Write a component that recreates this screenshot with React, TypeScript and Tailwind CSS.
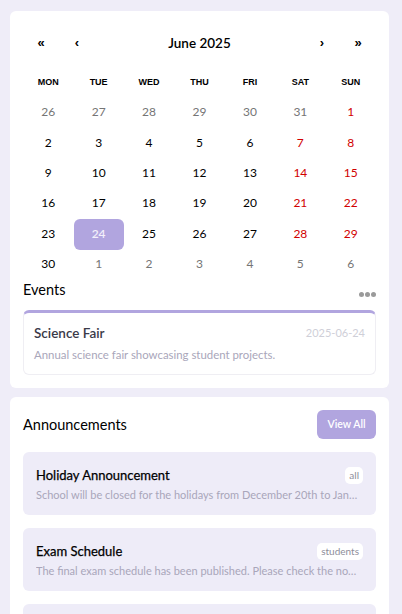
import React from "react";

const weekdays = ["MON", "TUE", "WED", "THU", "FRI", "SAT", "SUN"];

type Day = { n: number; cur: boolean };

const days: Day[] = [
  ...[26, 27, 28, 29, 30, 31].map((n) => ({ n, cur: false })),
  ...Array.from({ length: 30 }, (_, i) => ({ n: i + 1, cur: true })),
  ...[1, 2, 3, 4, 5, 6].map((n) => ({ n, cur: false })),
];

const rows: Day[][] = [];
for (let i = 0; i < days.length; i += 7) rows.push(days.slice(i, i + 7));

function Calendar() {
  return (
    <div className="w-full">
      <div className="flex h-[44px] items-center font-['Liberation_Sans',sans-serif] text-black">
        <div className="w-[36px] text-center text-[13px] font-bold">«</div>
        <div className="w-[36px] text-center text-[13px] font-bold">‹</div>
        <div className="flex-1 text-center text-[13.5px] font-semibold font-['Lato',sans-serif]">June 2025</div>
        <div className="w-[36px] text-center text-[13px] font-bold">›</div>
        <div className="w-[36px] text-center text-[13px] font-bold">»</div>
      </div>
      <div className="mt-[8px] grid h-[20px] grid-cols-7 items-center font-['Liberation_Sans',sans-serif] text-[9px] font-bold text-black">
        {weekdays.map((w) => (
          <div key={w} className="text-center">
            {w}
          </div>
        ))}
      </div>
      <div className="mt-[4px] font-['Lato',sans-serif] text-[12px]">
        {rows.map((r, ri) => (
          <div key={ri} className="grid h-[30.4px] grid-cols-7">
            {r.map((d, ci) => {
              const selected = d.cur && d.n === 24;
              const weekend = ci >= 5;
              let color = "text-black";
              if (!d.cur) color = "text-[#757575]";
              else if (weekend) color = "text-[#d10000]";
              if (selected)
                return (
                  <div key={ci} className="flex items-center justify-center">
                    <div className="flex h-[31px] w-[50px] items-center justify-center rounded-[6px] bg-[#b1a5df] font-semibold text-[#f3f0fb]">
                      {d.n}
                    </div>
                  </div>
                );
              return (
                <div key={ci} className={`flex items-center justify-center ${color}`}>
                  {d.n}
                </div>
              );
            })}
          </div>
        ))}
      </div>
    </div>
  );
}

function Announcement({ title, badge, desc }: { title: string; badge: string; desc: string }) {
  return (
    <div className="rounded-[6px] bg-[#eeecf8] px-[13px] pb-[12px] pt-[13px]">
      <div className="flex h-[20px] items-center justify-between">
        <div className="text-[13px] leading-[20px] text-black [-webkit-text-stroke:0.25px_black]">{title}</div>
        <div className="rounded-[5px] bg-white px-[4px] py-[1px] text-[10px] leading-[15px] text-[#8e8e9a]">{badge}</div>
      </div>
      <div className="mt-[2px] truncate text-[11px] leading-[16px] text-[#a9a6ba]">{desc}</div>
    </div>
  );
}

export default function App() {
  return (
    <div className="min-h-[614px] w-[402px] overflow-hidden bg-[#efedf8] font-['Lato',sans-serif]">
      <div className="ml-[10px] w-[379px] pt-[11px]">
        <div className="rounded-[6px] bg-white px-[13px] pb-[13px] pt-[10px]">
          <Calendar />
          <div className="flex h-[22px] items-center justify-between">
            <div className="text-[14.5px] leading-[22px] text-black">Events</div>
            <div className="mt-[8px] flex gap-[1px]">
              <span className="h-[5px] w-[5px] rounded-full bg-[#9a9a9a]" />
              <span className="h-[5px] w-[5px] rounded-full bg-[#9a9a9a]" />
              <span className="h-[5px] w-[5px] rounded-full bg-[#9a9a9a]" />
            </div>
          </div>
          <div className="mt-[9px] rounded-[6px] border border-t-[3px] border-[#efeef3] border-t-[#b1a5df] px-[10px] pb-[10px] pt-[10px]">
            <div className="flex h-[20px] items-center justify-between">
              <div className="text-[13.5px] font-semibold leading-[20px] text-[#3a3a48]">Science Fair</div>
              <div className="text-[11px] text-[#cfcfd8]">2025-06-24</div>
            </div>
            <div className="mt-[3px] text-[11.4px] leading-[18px] text-[#a9a6ba]">Annual science fair showcasing student projects.</div>
          </div>
        </div>
        <div className="mt-[9px] rounded-[6px] bg-white px-[13px] pt-[13px]">
          <div className="flex items-center justify-between">
            <div className="text-[14.5px] text-black">Announcements</div>
            <button className="h-[29px] w-[59px] rounded-[6px] bg-[#b1a5df] text-[10.5px] font-semibold text-white">
              View All
            </button>
          </div>
          <div className="mt-[13px] flex flex-col gap-[13px] pb-[13px]">
            <Announcement
              title="Holiday Announcement"
              badge="all"
              desc="School will be closed for the holidays from December 20th to January 5th."
            />
            <Announcement
              title="Exam Schedule"
              badge="students"
              desc="The final exam schedule has been published. Please check the notice board."
            />
            <Announcement
              title="Parent Teacher Meeting"
              badge="parents"
              desc="The parent teacher meeting will be held next week."
            />
          </div>
        </div>
      </div>
    </div>
  );
}
